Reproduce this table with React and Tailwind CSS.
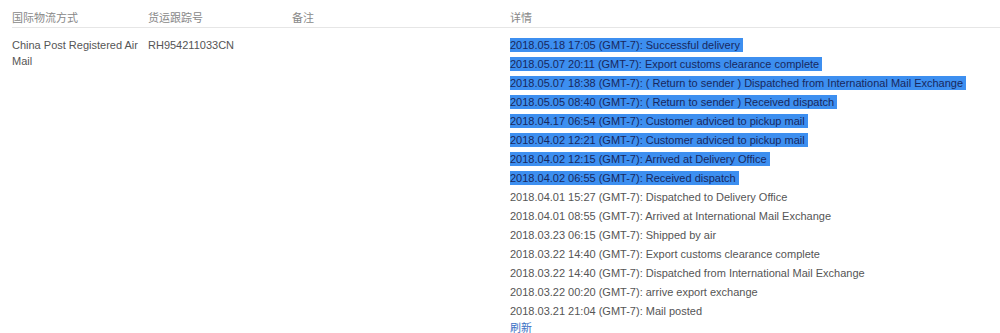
const events = [
  { t: "2018.05.18 17:05 (GMT-7): Successful delivery", sel: true },
  { t: "2018.05.07 20:11 (GMT-7): Export customs clearance complete", sel: true },
  { t: "2018.05.07 18:38 (GMT-7): ( Return to sender ) Dispatched from International Mail Exchange", sel: true },
  { t: "2018.05.05 08:40 (GMT-7): ( Return to sender ) Received dispatch", sel: true },
  { t: "2018.04.17 06:54 (GMT-7): Customer adviced to pickup mail", sel: true },
  { t: "2018.04.02 12:21 (GMT-7): Customer adviced to pickup mail", sel: true },
  { t: "2018.04.02 12:15 (GMT-7): Arrived at Delivery Office", sel: true },
  { t: "2018.04.02 06:55 (GMT-7): Received dispatch", sel: true },
  { t: "2018.04.01 15:27 (GMT-7): Dispatched to Delivery Office" },
  { t: "2018.04.01 08:55 (GMT-7): Arrived at International Mail Exchange" },
  { t: "2018.03.23 06:15 (GMT-7): Shipped by air" },
  { t: "2018.03.22 14:40 (GMT-7): Export customs clearance complete" },
  { t: "2018.03.22 14:40 (GMT-7): Dispatched from International Mail Exchange" },
  { t: "2018.03.22 00:20 (GMT-7): arrive export exchange" },
  { t: "2018.03.21 21:04 (GMT-7): Mail posted" },
];

export default function App() {
  return (
    <div
      className="w-[1000px] h-[333px] overflow-hidden bg-white text-[11px]"
      style={{ fontFamily: '"Liberation Sans", Arial, "Noto Sans CJK SC", sans-serif' }}
    >
      {/* header */}
      <div className="ml-3 grid grid-cols-[136px_144px_218px_1fr] h-[28px] pt-[11px] border-b border-[#e6e6e6] text-[#888] leading-[14px]">
        <div>国际物流方式</div>
        <div>货运跟踪号</div>
        <div>备注</div>
        <div>详情</div>
      </div>

      {/* body */}
      <div className="ml-3 grid grid-cols-[136px_144px_218px_1fr] text-[#555]">
        <div className="pt-[9px] pr-2 leading-[16px]">China Post Registered Air Mail</div>
        <div className="pt-[9px] leading-[16px]">RH954211033CN</div>
        <div></div>
        <div className="pt-[10px]">
          {events.map((e, i) => (
            <div key={i} className="leading-[14px] mb-[5px] whitespace-nowrap">
              {e.sel ? (
                <span className="inline-block bg-[#3d8ff0] text-[#18285e] pr-[3px]">{e.t}</span>
              ) : (
                <span>{e.t}</span>
              )}
            </div>
          ))}
          <div className="-mt-[1px] leading-[12px] text-[#3a6fc4]">刷新</div>
        </div>
      </div>
    </div>
  );
}
